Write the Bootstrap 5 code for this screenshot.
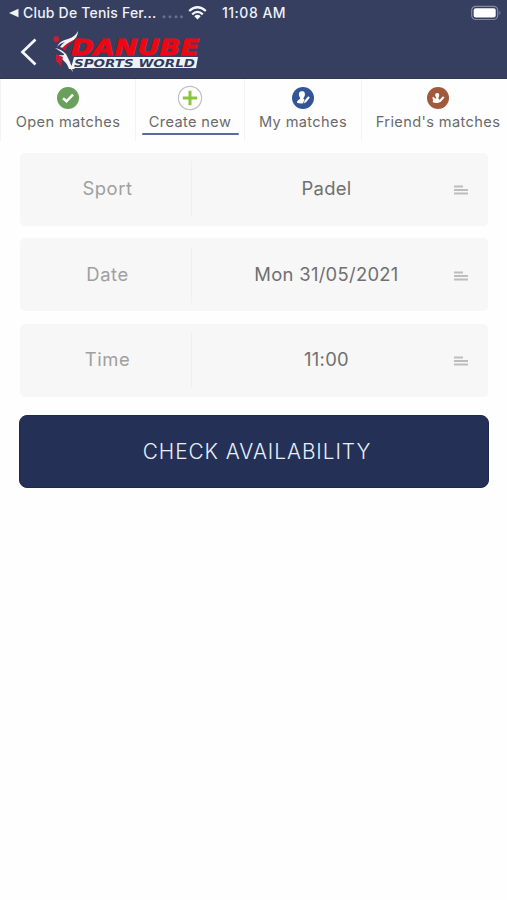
<!DOCTYPE html>
<html lang="en">
<head>
<meta charset="utf-8">
<meta name="viewport" content="width=device-width, initial-scale=1">
<title>Create new match</title>
<link href="https://cdn.jsdelivr.net/npm/bootstrap@5.3.0/dist/css/bootstrap.min.css" rel="stylesheet">
<style>
body{font-family:Inter,"Liberation Sans",sans-serif;background:#fefefe;color:#666;white-space:nowrap;overflow:hidden}
svg{display:block;flex:none}
.app-header{height:79px;background:#363f60;border-bottom:1px solid #2f3759}
.status-line{height:26px;padding-left:8px;color:#eef2fa;font-size:14px;font-weight:500;line-height:26px}
.status-app{width:134px;margin-left:4px;letter-spacing:.2px}
.status-time{margin-left:15px;letter-spacing:.5px}
.brand-line{height:52px;padding-left:20px}
.tab-item{height:62px;padding-top:6px;border-left:1px solid #f3f3f3;font-size:14.6px;line-height:20px;letter-spacing:.37px;color:#6a6a6a}
.tab-item svg{margin-bottom:1px}
.tab-item.current .tab-rule{width:97px;height:2px;background:#5a6c96;margin-top:1px;border-radius:1px}
.t1{width:135px}.t2{width:109px}.t3{width:117px}.t4{width:146px;padding-left:7px}
.form-area{padding:11.500px 19px 0 20px}
.pick-row{height:73px;background:#f7f7f7;border-radius:5px;margin-bottom:12.6px;font-size:18.4px;line-height:24px}
.pick-label{flex:0 0 172px;height:56px;border-right:1px solid #efefef;padding-top:15px;padding-left:4px;color:#a0a0a0;letter-spacing:.55px}
.pick-value{height:56px;padding-top:15px;color:#707070;letter-spacing:.3px}
.pick-value>span{width:262px;padding-left:7px}
.pick-value>svg{margin:9px 20px 0 0}
.check-btn,.check-btn:hover{height:73px;margin:6px -1px 0;padding:0 0 0 6px;width:470px;border-radius:8px;background:#243055;border:1px solid #1d2950;color:#e6f0fb;font-size:20.8px;font-weight:300;letter-spacing:.95px}
.logo-text{font-family:"DejaVu Sans",sans-serif;font-weight:700;font-style:italic}
</style>
</head>
<body>
<header class="app-header">
  <div class="status-line d-flex align-items-center">
    <svg width="11" height="10" viewBox="0 0 11 10"><path d="M1 5 10.500 .8V9.200z" fill="#eef2fa"/></svg>
    <span class="status-app">Club De Tenis Fer...</span>
    <svg class="ms-1" width="24" height="26" viewBox="0 0 24 26" fill="#666f8d"><circle cx="3" cy="16.700" r="1.500"/><circle cx="9" cy="16.700" r="1.500"/><circle cx="15" cy="16.700" r="1.500"/><circle cx="20.500" cy="16.700" r="1.500"/></svg>
    <svg width="19" height="14" viewBox="0 0 19 14" style="margin-left:3px"><g fill="none" stroke="#f5f8ff" stroke-width="2.300"><path d="M1.200 5Q9.500-2.400 17.800 5"/><path d="M4.200 8.300Q9.500 3.500 14.800 8.300"/></g><path d="M6.300 10.200Q9.500 7.300 12.700 10.200L9.500 13.500z" fill="#f5f8ff"/></svg>
    <span class="status-time">11:08 AM</span>
    <svg class="ms-auto me-1" width="32" height="16" viewBox="0 0 32 16"><rect x=".7" y="1.300" width="26" height="13.200" rx="4" fill="none" stroke="#818aa5" stroke-width="1.200"/><rect x="2.700" y="3.200" width="22" height="9.400" rx="2" fill="#fff"/><path d="M28.400 5.800q2 2.100 0 4.200z" fill="#818aa5"/></svg>
  </div>
  <div class="brand-line d-flex align-items-center">
    <svg width="18" height="28" viewBox="0 0 18 28"><path d="M15.500 1.500 2.500 14 15.500 26.500" fill="none" stroke="#f5f8ff" stroke-width="2.700"/></svg>
    <svg width="154" height="46" viewBox="50 30 154 46" style="margin-left:12px">
      <path d="M74 58H198L196 69H71z" fill="#eef2f8"/>
      <text class="logo-text"><tspan x="71" y="56" textLength="128" lengthAdjust="spacingAndGlyphs" font-size="21.500" fill="#ee0712" stroke="#ee0712" stroke-width=".8">DANUBE</tspan><tspan x="74" y="67.600" textLength="121" lengthAdjust="spacingAndGlyphs" font-size="11.300" fill="#303a5e">SPORTS WORLD</tspan></text>
      <circle cx="56.300" cy="40" r="3" fill="#c51f38"/>
      <path d="M57 48Q59 42 68 40Q75 38 78 32Q78 39 71 43Q66 45 63 49L60 48Q62 45 65 43Q60 44 57 48z" fill="#f2f4f8"/>
      <path d="M76 40Q68 43 62 49L65 52Q67 45 76 40z" fill="#df1024"/>
      <path d="M55 49Q61 50 66 55L70 63 73 73Q66 63 58 56Q65 57 64 55Q60 52 55 49z" fill="#f2f4f8"/>
      <path d="M56 55 63 58Q62 63 60.500 68 59 64 56 62z" fill="#c51f38"/>
      <path d="M65 60 75 70H69z" fill="#f2f4f8"/>
    </svg>
  </div>
</header>
<nav class="d-flex">
  <div class="tab-item t1 d-flex flex-column align-items-center">
    <svg width="24" height="26" viewBox="0 0 24 26"><circle cx="12" cy="13" r="11" fill="#68a05c"/><path d="M7 13.200 10.500 16.300 17 9.700" fill="none" stroke="#fff" stroke-width="2.500"/></svg>
    <span>Open matches</span>
  </div>
  <div class="tab-item t2 current d-flex flex-column align-items-center">
    <svg width="26" height="26" viewBox="0 0 26 26"><circle cx="13" cy="13" r="11.600" fill="#fff" stroke="#bdbfc6" stroke-width="1.200"/><path d="M13 5.800V20.200M5.800 13H20.200" stroke="#8bc53f" stroke-width="3"/></svg>
    <span>Create new</span><div class="tab-rule"></div>
  </div>
  <div class="tab-item t3 d-flex flex-column align-items-center">
    <svg width="24" height="26" viewBox="0 0 24 26"><circle cx="12" cy="13" r="11" fill="#315596"/><path d="M11 6.300c-2.700 0-3.500 2.100-3 4.300.3 1.300 1 2 1.300 2.700-.3 1.500-3.300 1.500-3.300 4.500 2 .8 4.500.8 6 .5l1.500-3.600c-.8-.4-1.100-.8-1.100-1.400.4-.7 1.100-1.400 1.400-2.700.5-2.200-.1-4.300-2.800-4.300z" fill="#fff"/><path d="M12.800 18.500 13.700 15.500 17.200 11.300 18.800 12.600 15.300 17z" fill="#fff"/></svg>
    <span>My matches</span>
  </div>
  <div class="tab-item t4 d-flex flex-column align-items-center">
    <svg width="24" height="26" viewBox="0 0 24 26"><circle cx="12" cy="13" r="11" fill="#a05a3b"/><path d="M11.300 8c-1.900 0-2.500 1.500-1.900 3.200l1 1.700-1.200.8-1.700-2-1.300 1 1 2.200c-.5.8-.5 1.500-.4 2.300 1.700.8 4 .8 5.800.5l.8-3.500-1.400-1c1.700-2 1.700-5.200-.7-5.200z" fill="#fff"/><path d="M12.400 18 13.300 15.300 17 11.300 18.500 12.400 15 16.500z" fill="#fff"/></svg>
    <span>Friend's matches</span>
  </div>
</nav>
<main class="form-area">
  <div class="pick-row d-flex align-items-center">
    <div class="pick-label text-center"><span>Sport</span></div>
    <div class="pick-value d-flex flex-fill"><span class="text-center">Padel</span><svg class="ms-auto" width="14" height="10" viewBox="0 0 14 10"><path d="M0 1.500H9M0 5H14M0 8.500H14" stroke="#bdbdbd" stroke-width="1.800"/></svg></div>
  </div>
  <div class="pick-row d-flex align-items-center">
    <div class="pick-label text-center"><span>Date</span></div>
    <div class="pick-value d-flex flex-fill"><span class="text-center">Mon 31/05/2021</span><svg class="ms-auto" width="14" height="10" viewBox="0 0 14 10"><path d="M0 1.500H9M0 5H14M0 8.500H14" stroke="#bdbdbd" stroke-width="1.800"/></svg></div>
  </div>
  <div class="pick-row d-flex align-items-center">
    <div class="pick-label text-center"><span>Time</span></div>
    <div class="pick-value d-flex flex-fill"><span class="text-center">11:00</span><svg class="ms-auto" width="14" height="10" viewBox="0 0 14 10"><path d="M0 1.500H9M0 5H14M0 8.500H14" stroke="#bdbdbd" stroke-width="1.800"/></svg></div>
  </div>
  <button class="btn check-btn" type="button">CHECK AVAILABILITY</button>
</main>
<script src="https://cdn.jsdelivr.net/npm/bootstrap@5.3.0/dist/js/bootstrap.bundle.min.js"></script>
</body>
</html>
